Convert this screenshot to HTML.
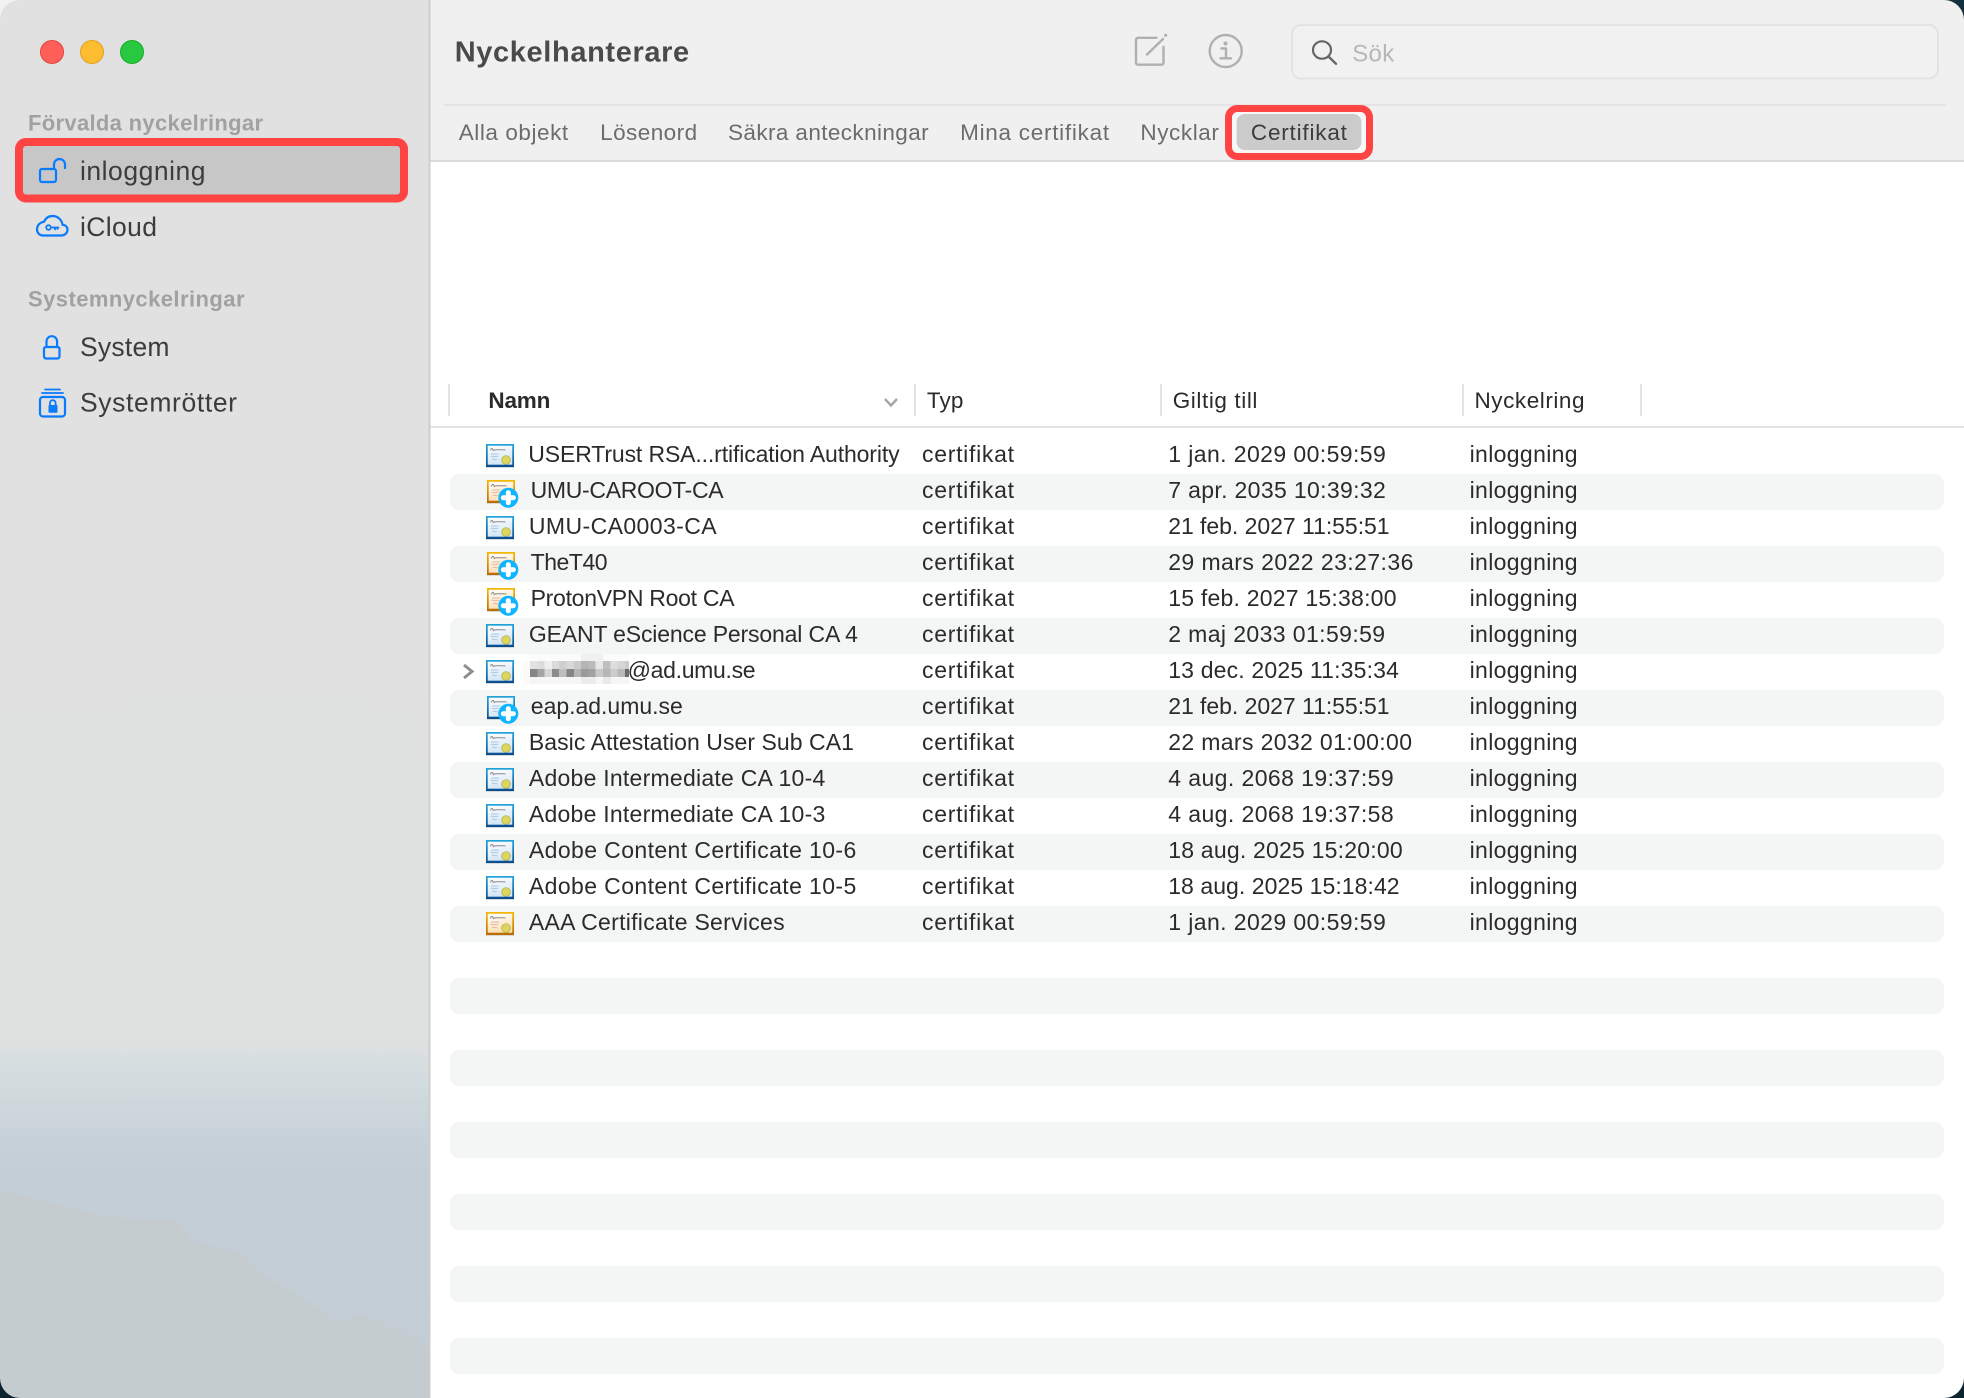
<!DOCTYPE html>
<html lang="sv">
<head>
<meta charset="utf-8">
<title>Nyckelhanterare</title>
<style>
html,body{margin:0;padding:0;background:#fff;width:1964px;height:1398px;overflow:hidden}
svg{display:block}
text{font-family:"Liberation Sans",sans-serif}
.r text{font-size:23px;fill:#2b2b2b}
.h{font-size:22.5px;fill:#2b2b2b}
.t{font-size:22.5px;fill:#6c6c6c}
.s{font-size:26.5px;fill:#3c3c3c}
.g{font-size:22px;font-weight:bold;fill:#a0a2a2}
.ic{fill:none;stroke:#0a7aff;stroke-width:2.2;stroke-linecap:round;stroke-linejoin:round}
.tb{fill:none;stroke:#b0b0b0;stroke-width:2.4;stroke-linecap:round;stroke-linejoin:round}
</style>
</head>
<body>
<svg width="1964" height="1398" viewBox="0 0 1964 1398" xmlns="http://www.w3.org/2000/svg">
<defs>
<linearGradient id="side" x1="0" y1="0" x2="0" y2="1398" gradientUnits="userSpaceOnUse">
<stop offset="0" stop-color="#e0e1e0"/>
<stop offset="0.745" stop-color="#dfe1e0"/>
<stop offset="0.76" stop-color="#d6dee0"/>
<stop offset="0.79" stop-color="#ced8dc"/>
<stop offset="0.815" stop-color="#c7d1d9"/>
<stop offset="0.84" stop-color="#c4ced6"/>
<stop offset="1" stop-color="#c4cdd5"/>
</linearGradient>
<linearGradient id="fb" x1="0" y1="0" x2="0" y2="1"><stop offset="0" stop-color="#22a4da"/><stop offset="1" stop-color="#0a4c90"/></linearGradient>
<linearGradient id="fo" x1="0" y1="0" x2="0" y2="1"><stop offset="0" stop-color="#f5b800"/><stop offset="1" stop-color="#b96a00"/></linearGradient>
<linearGradient id="pb" x1="0" y1="0" x2="0.3" y2="1"><stop offset="0" stop-color="#ffffff"/><stop offset="1" stop-color="#d4e6f6"/></linearGradient>
<linearGradient id="po" x1="0" y1="0" x2="0.3" y2="1"><stop offset="0" stop-color="#ffffff"/><stop offset="1" stop-color="#fce0b6"/></linearGradient>
<symbol id="cb" viewBox="0 0 28 24" width="28" height="24" overflow="visible">
<rect x="0" y="22.500" width="28" height="1.500" fill="#cfcfcf" opacity=".8"/>
<rect x="0" y="0" width="28" height="23" fill="url(#fb)"/>
<rect x="1.700" y="1.700" width="24.600" height="19" fill="url(#pb)"/>
<path d="M4.500 6.500c.6-3 2-2.500 2.500-.5s1-.8 1.800-.4 1 .7 2 .1 1.200.6 2 .1 1.300.5 2.200 0 1.300.4 2.200 0 1.400.3 2.300 0" fill="none" stroke="#8b8b8b" stroke-width="1"/>
<path d="M5 10h8M4.500 12.500c1.500-1.200 2.500 1 4.500 0s2 .6 3 0M6 15.500c2-1 3 1 5 0" fill="none" stroke="#a9c8e4" stroke-width="1"/>
<circle cx="20" cy="16" r="4.300" fill="#dcd65e" stroke="#b3a93b" stroke-width=".7"/>
</symbol>
<symbol id="co" viewBox="0 0 28 24" width="28" height="24" overflow="visible">
<rect x="0" y="22.500" width="28" height="1.500" fill="#cfcfcf" opacity=".8"/>
<rect x="0" y="0" width="28" height="23" fill="url(#fo)"/>
<rect x="1.700" y="1.700" width="24.600" height="19" fill="url(#po)"/>
<path d="M4.500 6.500c.6-3 2-2.500 2.500-.5s1-.8 1.800-.4 1 .7 2 .1 1.200.6 2 .1 1.300.5 2.200 0 1.300.4 2.200 0 1.400.3 2.300 0" fill="none" stroke="#8b8b8b" stroke-width="1"/>
<path d="M5 10h8M4.500 12.500c1.500-1.200 2.500 1 4.500 0s2 .6 3 0M6 15.500c2-1 3 1 5 0" fill="none" stroke="#eab4a8" stroke-width="1"/>
<circle cx="20" cy="16" r="4.300" fill="#dcd65e" stroke="#b3a93b" stroke-width=".7"/>
</symbol>
<symbol id="pl" viewBox="-10 -10 20 20" width="20" height="20" overflow="visible">
<circle cx="0" cy="0" r="10" fill="#10b4ff"/>
<path d="M-5 0H5M0 -5V5" stroke="#fff" stroke-width="5" stroke-linecap="round" fill="none"/>
</symbol>
</defs>

<!-- backgrounds -->
<rect x="0" y="0" width="1964" height="1398" fill="#ffffff"/>
<rect x="0" y="0" width="429" height="1398" fill="url(#side)"/>
<polygon points="0,1190 107,1217 176,1220 191,1240 241,1253 260,1272 329,1315 337,1323 364,1315 429,1345 429,1398 0,1398" fill="#c4cccf"/>
<rect x="430" y="0" width="1534" height="160" fill="#f0f0f0"/>
<rect x="428.500" y="0" width="2" height="1398" fill="#cdcdcd"/>
<rect x="430.500" y="160" width="1534" height="2" fill="#dadada"/>
<rect x="444" y="104" width="1502" height="2" fill="#e4e4e4"/>

<!-- stripes -->
<g fill="#f4f5f5">
<rect x="450" y="474" width="1494" height="36" rx="9"/>
<rect x="450" y="546" width="1494" height="36" rx="9"/>
<rect x="450" y="618" width="1494" height="36" rx="9"/>
<rect x="450" y="690" width="1494" height="36" rx="9"/>
<rect x="450" y="762" width="1494" height="36" rx="9"/>
<rect x="450" y="834" width="1494" height="36" rx="9"/>
<rect x="450" y="906" width="1494" height="36" rx="9"/>
<rect x="450" y="978" width="1494" height="36" rx="9"/>
<rect x="450" y="1050" width="1494" height="36" rx="9"/>
<rect x="450" y="1122" width="1494" height="36" rx="9"/>
<rect x="450" y="1194" width="1494" height="36" rx="9"/>
<rect x="450" y="1266" width="1494" height="36" rx="9"/>
<rect x="450" y="1338" width="1494" height="36" rx="9"/>
</g>

<!-- traffic lights -->
<circle cx="52" cy="52" r="11.500" fill="#ff5f57" stroke="#e0443e"/>
<circle cx="92" cy="52" r="11.500" fill="#febc2e" stroke="#dea123"/>
<circle cx="132" cy="52" r="11.500" fill="#28c840" stroke="#1aab29"/>

<!-- sidebar -->
<text class="g" x="28" y="130.500" textLength="235">Förvalda nyckelringar</text>
<rect x="19" y="142" width="385" height="56.500" rx="7" fill="#c6c7c6" stroke="#ff4444" stroke-width="8"/>
<text class="s" x="80" y="180" textLength="125.500">inloggning</text>
<text class="s" x="80" y="236" textLength="77">iCloud</text>
<text class="g" x="28" y="306.500" textLength="216.500">Systemnyckelringar</text>
<text class="s" x="80" y="356" textLength="89.500">System</text>
<text class="s" x="80" y="411.500" textLength="157">Systemrötter</text>

<!-- lock open -->
<g class="ic">
<rect x="40" y="169" width="16" height="13" rx="2"/>
<path d="M54 168.500V164.500a5.500 5.500 0 0 1 11 0V168"/>
</g>
<!-- iCloud key -->
<g class="ic">
<path d="M43 235.500H61C65 235.500 67.500 233 67.500 229.800C67.500 227 65.500 225 62.500 224.800C61.800 219.500 57.500 216 52.500 216C48.500 216 45.500 218.500 44 221.800C40 222.200 37 225.500 37 229.300C37 233 39.800 235.500 43 235.500Z"/>
<circle cx="48.500" cy="227.500" r="2.300" stroke-width="1.800"/>
<path d="M51 227.500H58.500M55 227.500V229.500M57.500 227.500V229" stroke-width="1.800"/>
</g>
<!-- System lock -->
<g class="ic">
<rect x="44" y="347" width="15.500" height="11.500" rx="2"/>
<path d="M46.500 347V341.500a5.300 5.300 0 0 1 10.600 0V347"/>
</g>
<!-- Systemrötter -->
<g class="ic">
<path d="M45 389.500H60" stroke-width="1.800"/>
<path d="M42 393H63" stroke-width="1.800"/>
<rect x="40" y="397" width="25" height="19.500" rx="3"/>
<path d="M50 405V403a2.800 2.800 0 0 1 5.600 0V405" stroke-width="1.800"/>
</g>
<rect x="48.500" y="405" width="9" height="7.800" rx="1" fill="#0a7aff"/>

<!-- Title & toolbar -->
<text x="454.700" y="61.500" font-size="29" font-weight="bold" fill="#4a4a4a" textLength="234.500">Nyckelhanterare</text>
<g class="tb">
<path d="M1156.500 37.800H1138.500Q1136 37.800 1136 40.300V62.200Q1136 64.700 1138.500 64.700H1161Q1163.500 64.700 1163.500 62.200V46.800"/>
<path d="M1147 54.500L1163 39"/>
<circle cx="1225.700" cy="51" r="16"/>
<path d="M1221.500 48.500H1226V58M1220.500 58.300H1231"/>
</g>
<circle cx="1165.700" cy="35.300" r="1.600" fill="#b0b0b0"/>
<circle cx="1225.500" cy="43.500" r="2" fill="#b0b0b0"/>

<rect x="1292" y="25" width="646" height="53.500" rx="9" fill="#f1f1f1" stroke="#e3e3e3" stroke-width="2"/>
<ellipse cx="1322" cy="50" rx="9" ry="8.700" fill="none" stroke="#666" stroke-width="2.200"/>
<path d="M1328.500 56.500L1336 63.800" stroke="#666" stroke-width="2.400" stroke-linecap="round"/>
<text x="1352.200" y="61.500" font-size="24" fill="#b7b7b7" textLength="42">Sök</text>

<!-- tabs -->
<text class="t" x="458.700" y="140" textLength="109.500">Alla objekt</text>
<text class="t" x="600.100" y="140" textLength="97">Lösenord</text>
<text class="t" x="728" y="140" textLength="200.600">Säkra anteckningar</text>
<text class="t" x="960.100" y="140" textLength="149">Mina certifikat</text>
<text class="t" x="1140.400" y="140" textLength="78.500">Nycklar</text>
<rect x="1228.500" y="108.500" width="141" height="48" rx="9" fill="#f7f7f7" stroke="#ff4444" stroke-width="7"/>
<rect x="1236.600" y="114" width="124.800" height="36" rx="8" fill="#cbcbcb"/>
<text class="t" style="fill:#3c3c3c" x="1250.900" y="140" textLength="96">Certifikat</text>

<!-- table header -->
<g fill="#e3e3e3">
<rect x="448" y="384" width="2" height="32"/>
<rect x="914" y="384" width="2" height="32"/>
<rect x="1160" y="384" width="2" height="32"/>
<rect x="1462" y="384" width="2" height="32"/>
<rect x="1640" y="384" width="2" height="32"/>
<rect x="430.500" y="426" width="1534" height="2"/>
</g>
<text class="h" font-weight="bold" x="488.400" y="408" textLength="62">Namn</text>
<path d="M885 399L891 405.500L897 399" fill="none" stroke="#a5a5a5" stroke-width="2.400"/>
<text class="h" x="926.900" y="408" textLength="36.500">Typ</text>
<text class="h" x="1172.700" y="408" textLength="84.700">Giltig till</text>
<text class="h" x="1474.500" y="408" textLength="110">Nyckelring</text>

<!-- icons -->
<use href="#cb" x="486" y="444"/>
<use href="#co" x="487" y="480"/><use href="#pl" x="498.300" y="487.700"/>
<use href="#cb" x="486" y="516"/>
<use href="#co" x="487" y="552"/><use href="#pl" x="498.300" y="559.700"/>
<use href="#co" x="487" y="588"/><use href="#pl" x="498.300" y="595.700"/>
<use href="#cb" x="486" y="624"/>
<use href="#cb" x="486" y="660"/>
<use href="#cb" x="487" y="696"/><use href="#pl" x="498.300" y="703.700"/>
<use href="#cb" x="486" y="732"/>
<use href="#cb" x="486" y="768"/>
<use href="#cb" x="486" y="804"/>
<use href="#cb" x="486" y="840"/>
<use href="#cb" x="486" y="876"/>
<use href="#co" x="486" y="912"/>

<!-- disclosure -->
<path d="M464 665L472 671.500L464 678" fill="none" stroke="#8e8e8e" stroke-width="3"/>

<!-- mosaic -->
<g shape-rendering="crispEdges">
<rect x="530" y="654" width="99" height="7" fill="#fbfbfb"/>
<rect x="581" y="654" width="22" height="7" fill="#f0f0f0"/>
<rect x="523" y="661" width="7" height="23" fill="#fbfbfb"/>
<rect x="530" y="661" width="7.300" height="8" fill="#e2e2e2"/>
<rect x="537.300" y="661" width="7.300" height="8" fill="#dcdcdc"/>
<rect x="544.600" y="661" width="7.300" height="8" fill="#eeeeee"/>
<rect x="551.900" y="661" width="7.300" height="8" fill="#dadada"/>
<rect x="559.200" y="661" width="7.300" height="8" fill="#cfcfcf"/>
<rect x="566.500" y="661" width="7.300" height="8" fill="#d8d8d8"/>
<rect x="573.800" y="661" width="7.300" height="8" fill="#cbcbcb"/>
<rect x="581.100" y="661" width="7.300" height="8" fill="#b5b5b5"/>
<rect x="588.400" y="661" width="7.300" height="8" fill="#bbbbbb"/>
<rect x="595.700" y="661" width="7.300" height="8" fill="#e8e8e8"/>
<rect x="603" y="661" width="7.300" height="8" fill="#bfbfbf"/>
<rect x="610.300" y="661" width="7.300" height="8" fill="#dddddd"/>
<rect x="617.600" y="661" width="7.300" height="8" fill="#d6d6d6"/>
<rect x="624.900" y="661" width="4" height="8" fill="#cccccc"/>
<rect x="530" y="669" width="7.300" height="8" fill="#858585"/>
<rect x="537.300" y="669" width="7.300" height="8" fill="#a4a4a4"/>
<rect x="544.600" y="669" width="7.300" height="8" fill="#d6d6d6"/>
<rect x="551.900" y="669" width="7.300" height="8" fill="#8a8a8a"/>
<rect x="559.200" y="669" width="7.300" height="8" fill="#bebebe"/>
<rect x="566.500" y="669" width="7.300" height="8" fill="#858585"/>
<rect x="573.800" y="669" width="7.300" height="8" fill="#b4b4b4"/>
<rect x="581.100" y="669" width="7.300" height="8" fill="#9a9a9a"/>
<rect x="588.400" y="669" width="7.300" height="8" fill="#a2a2a2"/>
<rect x="595.700" y="669" width="7.300" height="8" fill="#c8c8c8"/>
<rect x="603" y="669" width="7.300" height="8" fill="#b6b6b6"/>
<rect x="610.300" y="669" width="7.300" height="8" fill="#cccccc"/>
<rect x="617.600" y="669" width="7.300" height="8" fill="#bababa"/>
<rect x="624.900" y="669" width="4" height="8" fill="#6c6c6c"/>
<rect x="530" y="677" width="99" height="7" fill="#f6f6f6"/>
<rect x="581" y="677" width="15" height="7" fill="#ececec"/>
<rect x="603" y="677" width="8" height="7" fill="#e9e9e9"/>
</g>

<!-- rows -->
<g class="r" transform="translate(-0.4,-0.5)">
<text x="528.700" y="462.500" textLength="371.300">USERTrust RSA...rtification Authority</text>
<text x="922.400" y="462.500" textLength="92">certifikat</text>
<text x="1168.600" y="462.500" textLength="217.600">1 jan. 2029 00:59:59</text>
<text x="1470" y="462.500" textLength="108">inloggning</text>

<text x="531" y="498.500" textLength="193">UMU-CAROOT-CA</text>
<text x="922.400" y="498.500" textLength="92">certifikat</text>
<text x="1168.600" y="498.500" textLength="217.600">7 apr. 2035 10:39:32</text>
<text x="1470" y="498.500" textLength="108">inloggning</text>

<text x="529.300" y="534.500" textLength="187.700">UMU-CA0003-CA</text>
<text x="922.400" y="534.500" textLength="92">certifikat</text>
<text x="1168.600" y="534.500" textLength="221.400">21 feb. 2027 11:55:51</text>
<text x="1470" y="534.500" textLength="108">inloggning</text>

<text x="531" y="570.500" textLength="77">TheT40</text>
<text x="922.400" y="570.500" textLength="92">certifikat</text>
<text x="1168.600" y="570.500" textLength="245.200">29 mars 2022 23:27:36</text>
<text x="1470" y="570.500" textLength="108">inloggning</text>

<text x="531" y="606.500" textLength="204">ProtonVPN Root CA</text>
<text x="922.400" y="606.500" textLength="92">certifikat</text>
<text x="1168.600" y="606.500" textLength="228.300">15 feb. 2027 15:38:00</text>
<text x="1470" y="606.500" textLength="108">inloggning</text>

<text x="529.300" y="642.500" textLength="329">GEANT eScience Personal CA 4</text>
<text x="922.400" y="642.500" textLength="92">certifikat</text>
<text x="1168.600" y="642.500" textLength="216.900">2 maj 2033 01:59:59</text>
<text x="1470" y="642.500" textLength="108">inloggning</text>

<text x="628" y="678.500" textLength="128">@ad.umu.se</text>
<text x="922.400" y="678.500" textLength="92">certifikat</text>
<text x="1168.600" y="678.500" textLength="230.700">13 dec. 2025 11:35:34</text>
<text x="1470" y="678.500" textLength="108">inloggning</text>

<text x="531.200" y="714.500" textLength="152">eap.ad.umu.se</text>
<text x="922.400" y="714.500" textLength="92">certifikat</text>
<text x="1168.600" y="714.500" textLength="221.400">21 feb. 2027 11:55:51</text>
<text x="1470" y="714.500" textLength="108">inloggning</text>

<text x="529.300" y="750.500" textLength="325">Basic Attestation User Sub CA1</text>
<text x="922.400" y="750.500" textLength="92">certifikat</text>
<text x="1168.600" y="750.500" textLength="243.800">22 mars 2032 01:00:00</text>
<text x="1470" y="750.500" textLength="108">inloggning</text>

<text x="529.300" y="786.500" textLength="296.400">Adobe Intermediate CA 10-4</text>
<text x="922.400" y="786.500" textLength="92">certifikat</text>
<text x="1168.600" y="786.500" textLength="225.500">4 aug. 2068 19:37:59</text>
<text x="1470" y="786.500" textLength="108">inloggning</text>

<text x="529.300" y="822.500" textLength="296.400">Adobe Intermediate CA 10-3</text>
<text x="922.400" y="822.500" textLength="92">certifikat</text>
<text x="1168.600" y="822.500" textLength="225.500">4 aug. 2068 19:37:58</text>
<text x="1470" y="822.500" textLength="108">inloggning</text>

<text x="529.300" y="858.500" textLength="327.400">Adobe Content Certificate 10-6</text>
<text x="922.400" y="858.500" textLength="92">certifikat</text>
<text x="1168.600" y="858.500" textLength="234.500">18 aug. 2025 15:20:00</text>
<text x="1470" y="858.500" textLength="108">inloggning</text>

<text x="529.300" y="894.500" textLength="327.400">Adobe Content Certificate 10-5</text>
<text x="922.400" y="894.500" textLength="92">certifikat</text>
<text x="1168.600" y="894.500" textLength="231.400">18 aug. 2025 15:18:42</text>
<text x="1470" y="894.500" textLength="108">inloggning</text>

<text x="529.300" y="930.500" textLength="255.700">AAA Certificate Services</text>
<text x="922.400" y="930.500" textLength="92">certifikat</text>
<text x="1168.600" y="930.500" textLength="217.600">1 jan. 2029 00:59:59</text>
<text x="1470" y="930.500" textLength="108">inloggning</text>
</g>

<!-- window corners -->
<path d="M0 0H20A20 20 0 0 0 0 20Z" fill="#f2f2f2"/>
<path d="M1964 0H1944A20 20 0 0 1 1964 20Z" fill="#14303e"/>
<path d="M0 1398V1378A20 20 0 0 0 20 1398Z" fill="#0c2430"/>
<path d="M1964 1398V1378A20 20 0 0 1 1944 1398Z" fill="#0c2430"/>
</svg>
</body>
</html>
